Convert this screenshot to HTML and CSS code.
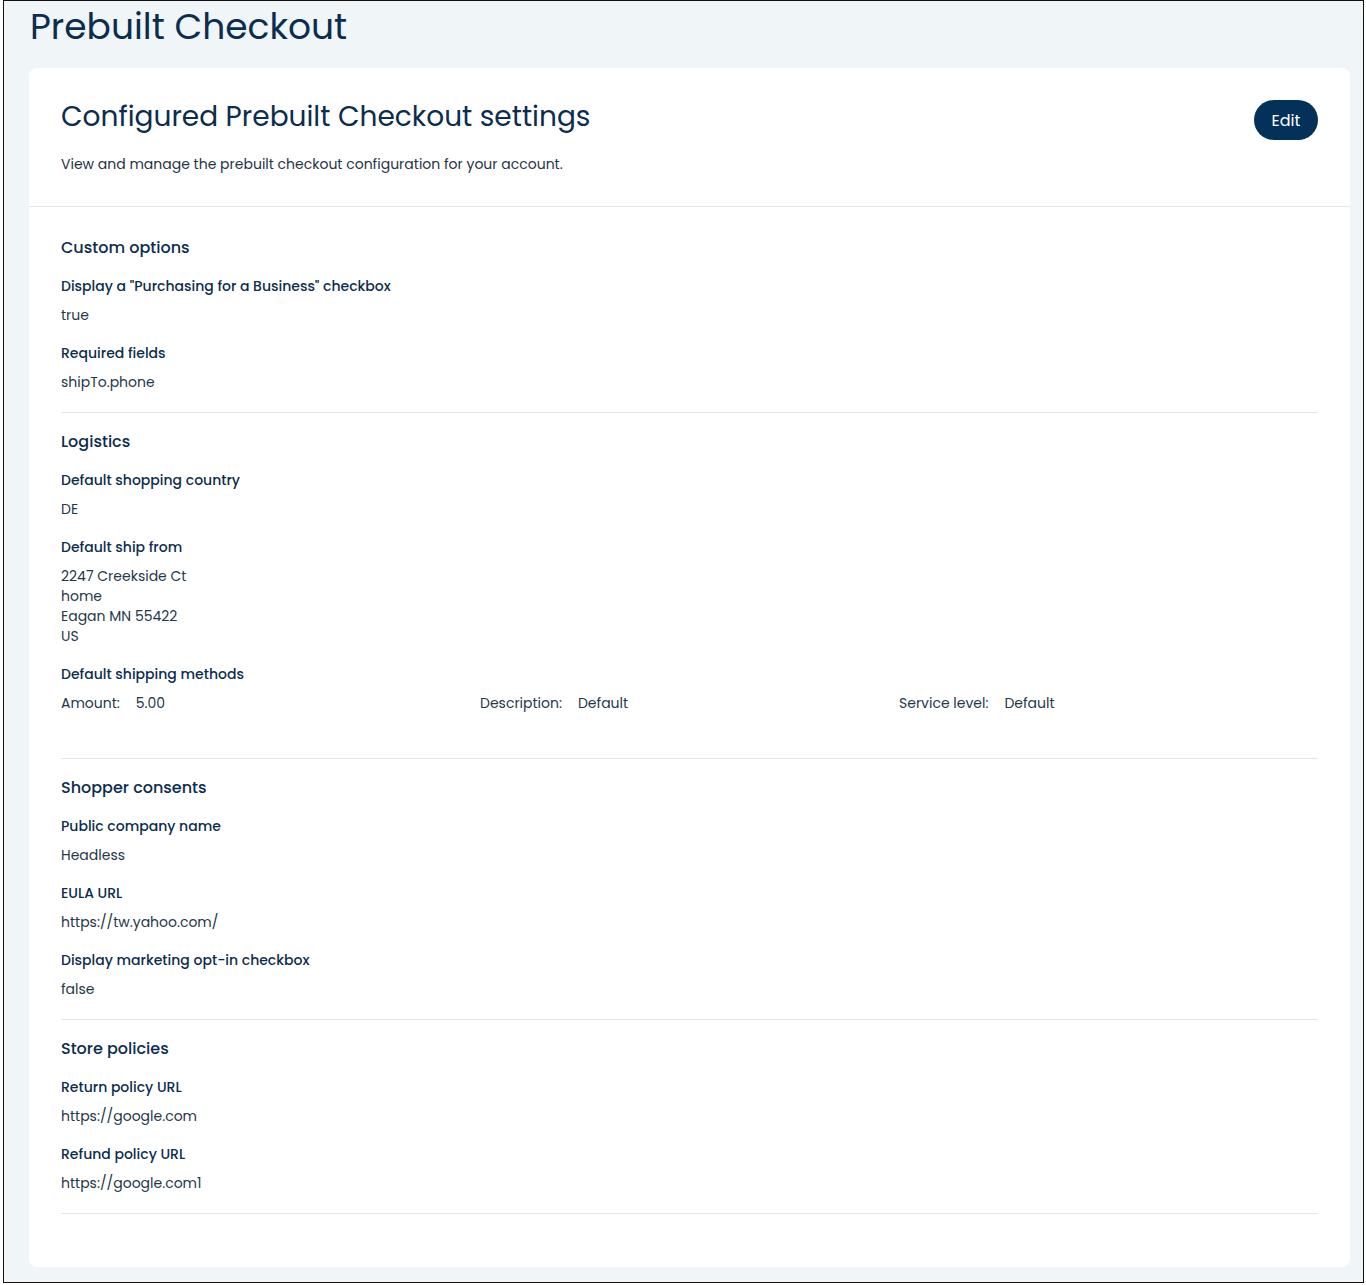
FILE: index.html
```html
<!DOCTYPE html>
<html lang="en">
<head>
<meta charset="utf-8">
<title>Prebuilt Checkout</title>
<link rel="stylesheet" href="styles.css">
</head>
<body>
<div class="frame">
  <h1 class="page-title">Prebuilt Checkout</h1>
  <div class="card">
    <div class="card-header">
      <div class="card-header-text">
        <h2 class="card-title">Configured Prebuilt Checkout settings</h2>
        <p class="card-subtitle">View and manage the prebuilt checkout configuration for your account.</p>
      </div>
      <button class="btn-edit" type="button">Edit</button>
    </div>
    <div class="card-body">
      <section class="section section-first">
        <h3 class="section-title">Custom options</h3>
        <div class="field">
          <div class="field-label">Display a "Purchasing for a Business" checkbox</div>
          <div class="field-value">true</div>
        </div>
        <div class="field">
          <div class="field-label">Required fields</div>
          <div class="field-value">shipTo.phone</div>
        </div>
      </section>
      <section class="section section-logistics">
        <h3 class="section-title">Logistics</h3>
        <div class="field">
          <div class="field-label">Default shopping country</div>
          <div class="field-value">DE</div>
        </div>
        <div class="field">
          <div class="field-label">Default ship from</div>
          <div class="field-value">2247 Creekside Ct<br>home<br>Eagan MN 55422<br>US</div>
        </div>
        <div class="field">
          <div class="field-label">Default shipping methods</div>
          <div class="ship-row">
            <div class="ship-cell"><span class="ship-key">Amount:</span><span class="ship-val">5.00</span></div>
            <div class="ship-cell"><span class="ship-key">Description:</span><span class="ship-val">Default</span></div>
            <div class="ship-cell"><span class="ship-key">Service level:</span><span class="ship-val">Default</span></div>
          </div>
        </div>
      </section>
      <section class="section">
        <h3 class="section-title">Shopper consents</h3>
        <div class="field">
          <div class="field-label">Public company name</div>
          <div class="field-value">Headless</div>
        </div>
        <div class="field">
          <div class="field-label">EULA URL</div>
          <div class="field-value">https://tw.yahoo.com/</div>
        </div>
        <div class="field">
          <div class="field-label">Display marketing opt-in checkbox</div>
          <div class="field-value">false</div>
        </div>
      </section>
      <section class="section">
        <h3 class="section-title">Store policies</h3>
        <div class="field">
          <div class="field-label">Return policy URL</div>
          <div class="field-value">https://google.com</div>
        </div>
        <div class="field">
          <div class="field-label">Refund policy URL</div>
          <div class="field-value">https://google.com1</div>
        </div>
      </section>
    </div>
  </div>
</div>
</body>
</html>
```

FILE: styles.css
```css
* { box-sizing: border-box; }
html, body { margin: 0; padding: 0; background: #ffffff; }
body {
  font-family: "Poppins", "Open Sans", "DejaVu Sans", sans-serif;
  color: #0a2b4c;
}
.frame {
  margin-left: 3px;
  width: 1361px;
  height: 1283px;
  border: 1px solid #111;
  background: #f0f5f8;
  padding: 0 13px 0 25px;
}
.page-title {
  margin: 0;
  padding-left: 1px;
  font-size: 36px;
  line-height: 52px;
  font-weight: 400;
  color: #0b2d4f;
  height: 67px;
}
.card {
  background: #ffffff;
  border-radius: 8px;
  height: 1199px;
}
.card-header {
  display: flex;
  justify-content: space-between;
  align-items: flex-start;
  padding: 32px 32px 32px 32px;
  border-bottom: 1px solid #e3e6e9;
}
.card-header-text { padding-top: 1px; }
.card-title {
  margin: 0;
  font-size: 28px;
  line-height: 32px;
  font-weight: 400;
  color: #0b2d4f;
}
.card-subtitle {
  margin: 21px 0 0;
  font-size: 14px;
  line-height: 20px;
  color: #1f3447;
}
.btn-edit {
  width: 64px;
  height: 40px;
  border: none;
  border-radius: 20px;
  background: #04315a;
  color: #ffffff;
  font-family: inherit;
  font-size: 16px;
  font-weight: 400;
  padding: 0;
}
.card-body {
  padding: 12px 32px 0;
}
.section {
  padding: 17px 0 20px;
  border-bottom: 1px solid #e3e6e9;
}
.section-logistics { padding-bottom: 45px; }
.section-title {
  margin: 0;
  font-size: 16px;
  line-height: 24px;
  font-weight: 500;
  color: #0b2d4f;
}
.field { margin-top: 16px; }
.field + .field { margin-top: 18px; }
.field-label {
  font-size: 14px;
  line-height: 20px;
  font-weight: 500;
  color: #0b2d4f;
}
.field-value {
  margin-top: 9px;
  font-size: 14px;
  line-height: 20px;
  color: #24384b;
}
.ship-row {
  margin-top: 9px;
  display: grid;
  grid-template-columns: repeat(3, 1fr);
  font-size: 14px;
  line-height: 20px;
  color: #24384b;
}
.ship-key { margin-right: 16px; }
```
